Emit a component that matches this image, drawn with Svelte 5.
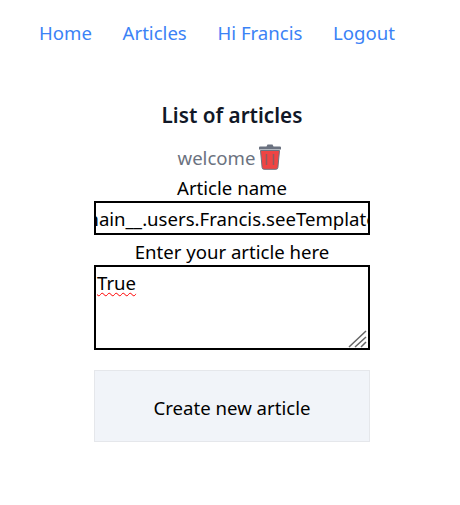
<script>
  import { onMount } from 'svelte'

  const links = ['Home', 'Articles', 'Hi Francis', 'Logout']
  let nameInput
  onMount(() => {
    nameInput.scrollLeft = 31
  })
</script>

<nav class="nav">
  {#each links as link}
    <a href="#top" class="nav-link">{link}</a>
  {/each}
</nav>

<main class="content">
  <h1 class="title">List of articles</h1>
  <div class="article">
    <a href="#top" class="article-link">welcome</a>
    <svg class="trash" viewBox="0 0 24 26" aria-hidden="true">
      <path class="lid" d="M8.500 3 9.500 1h5l1 2H22a1 1 0 0 1 1 1v2H1V4a1 1 0 0 1 1-1z" />
      <path class="can" d="M2.500 7h19l-1.600 17a2 2 0 0 1-2 1.800H6.100a2 2 0 0 1-2-1.800z" />
      <path class="slot" d="M8.500 10.500v11M15.500 10.500v11" />
    </svg>
  </div>
  <form class="form">
    <label for="name">Article name</label>
    <input id="name" bind:this={nameInput} value="__main__.users.Francis.seeTemplates.article" />
    <label for="body">Enter your article here</label>
    <div class="body-wrap">
      <textarea id="body" spellcheck="false">True</textarea>
      <svg class="grip" viewBox="0 0 20 18" aria-hidden="true">
        <path d="M1 17 18 1M7 17 18 7M13 17 18 12" />
      </svg>
    </div>
    <button type="button" class="submit">Create new article</button>
  </form>
</main>

<style>
  :global(body) {
    background: #fff;
    color: #000;
    font-family: "Noto Sans", "Open Sans", sans-serif;
  }

  .nav {
    display: flex;
    gap: 30.700px;
    padding: 19px 0 0 39px;
  }

  .nav-link {
    color: #3b82f6;
    font-size: 18.600px;
    line-height: 28px;
    text-decoration: none;
  }

  .content {
    display: flex;
    flex-direction: column;
    align-items: center;
    width: 276px;
    margin: 0 0 0 94px;
    padding-top: 48px;
  }

  .title {
    margin: 0;
    color: #111827;
    font-size: 20.700px;
    font-weight: 600;
    line-height: 40px;
  }

  .article {
    display: flex;
    align-items: center;
    gap: 3px;
    height: 28px;
    margin-top: 8px;
    padding-right: 4px;
  }

  .article-link {
    color: #6b7280;
    font-size: 18.600px;
    text-decoration: none;
  }

  .trash {
    width: 24px;
    height: 27px;
    margin-top: -2px;
  }

  .lid {
    fill: #6b7280;
  }

  .can {
    fill: #ef4444;
    stroke: #6b7280;
    stroke-width: 1;
  }

  .slot {
    fill: none;
    stroke: #8f5a5e;
    stroke-width: 1.500;
  }

  .form {
    display: flex;
    flex-direction: column;
    align-items: center;
    width: 100%;
  }

  label {
    padding-top: 4px;
    font-size: 18.600px;
    line-height: 26px;
  }

  input,
  textarea {
    box-sizing: border-box;
    width: 100%;
    border: 2px solid #000;
    border-radius: 0;
    color: #000;
    font-family: inherit;
    font-size: 18.600px;
    line-height: 28px;
    outline: none;
  }

  input {
    height: 34px;
    padding: 0;
  }

  .body-wrap {
    position: relative;
    width: 100%;
  }

  textarea {
    display: block;
    height: 85px;
    padding: 2px 1px 0;
    resize: none;
    text-decoration: underline wavy #f00 1.200px;
    text-underline-offset: 2px;
  }

  .grip {
    position: absolute;
    right: 2px;
    bottom: 2px;
    width: 20px;
    height: 18px;
    pointer-events: none;
  }

  .grip path {
    fill: none;
    stroke: #666;
    stroke-width: 1.500;
  }

  .submit {
    box-sizing: border-box;
    width: 100%;
    height: 72px;
    margin-top: 20px;
    padding-top: 3px;
    border: 1px solid #e5e7eb;
    background: #f1f4f9;
    color: #000;
    font-family: inherit;
    font-size: 18.600px;
  }
</style>
